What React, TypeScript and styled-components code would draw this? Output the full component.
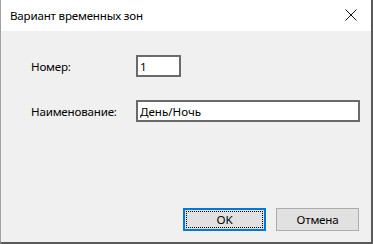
import React from 'react'
import styled, { createGlobalStyle } from 'styled-components'

const GlobalStyle = createGlobalStyle`
    html, body {
        margin: 0;
        padding: 0;
        width: 100%;
        height: 100%;
        overflow: hidden;
    }
    #root {
        height: 100%;
    }
`

const App = () => {
    return (
        <>
            <GlobalStyle />
            <Window>
                <TitleBar>
                    <Title>Вариант временных зон</Title>
                    <CloseButton aria-label="Закрыть">
                        <svg width="12" height="12" viewBox="0 0 12 12">
                            <path d="M0.5 0.5 L11.5 11.5 M11.5 0.5 L0.5 11.5" stroke="#111" strokeWidth="1" fill="none" />
                        </svg>
                    </CloseButton>
                </TitleBar>
                <Body>
                    <Form>
                        <Label>Номер:</Label>
                        <TextBox $width={45} defaultValue="1" />
                        <Label>Наименование:</Label>
                        <TextBox $width={224} defaultValue="День/Ночь" />
                    </Form>
                    <ButtonRow>
                        <DialogButton $focused>
                            <FocusRing>OK</FocusRing>
                        </DialogButton>
                        <DialogButton>
                            <FocusRing>Отмена</FocusRing>
                        </DialogButton>
                    </ButtonRow>
                </Body>
            </Window>
        </>
    )
}

export default App

const Window = styled.div`
    height: 100vh;
    box-sizing: border-box;
    display: flex;
    flex-direction: column;
    border-left: 1px solid #a0a0a0;
    border-right: 2px solid #5a5a5a;
    border-bottom: 2px solid #5a5a5a;
    font-family: 'Noto Sans', 'Open Sans', sans-serif;
    font-size: 11.6px;
    letter-spacing: -0.2px;
    color: #000;
`
const TitleBar = styled.div`
    height: 31px;
    flex: none;
    display: flex;
    align-items: center;
    justify-content: space-between;
    background: #fff;
    padding: 0 0 1px 9px;
    box-sizing: border-box;
`
const Title = styled.div`
    color: #000;
`
const CloseButton = styled.div`
    width: 40px;
    display: flex;
    align-items: center;
    justify-content: center;
    padding-left: 8px;
`
const Body = styled.div`
    flex: 1;
    display: flex;
    flex-direction: column;
    justify-content: space-between;
    background: #f0f0f0;
    padding: 24px 12px 11px 30px;
`
const Form = styled.div`
    display: grid;
    grid-template-columns: 105px auto;
    row-gap: 23px;
    align-items: center;
    justify-content: start;
`
const Label = styled.div`
    white-space: nowrap;
`
const TextBox = styled.input<{ $width: number }>`
    width: ${(p) => p.$width}px;
    height: 22px;
    box-sizing: border-box;
    margin: 0;
    padding: 0 2px;
    border: 2px solid #6a6a6a;
    background: #fff;
    font: inherit;
    color: #000;
    outline: none;
`
const ButtonRow = styled.div`
    display: flex;
    justify-content: flex-end;
    gap: 10px;
`
const DialogButton = styled.div<{ $focused?: boolean }>`
    width: 83px;
    height: 23px;
    box-sizing: border-box;
    padding: ${(p) => (p.$focused ? '1px' : '2px')};
    background: #e1e1e1;
    border: ${(p) => (p.$focused ? '2px solid #0078d7' : '1px solid #adadad')};
    display: flex;
    & > div {
        border-color: ${(p) => (p.$focused ? '#000' : 'transparent')};
    }
`
const FocusRing = styled.div`
    flex: 1;
    display: flex;
    align-items: center;
    justify-content: center;
    border: 1px dotted transparent;
`
